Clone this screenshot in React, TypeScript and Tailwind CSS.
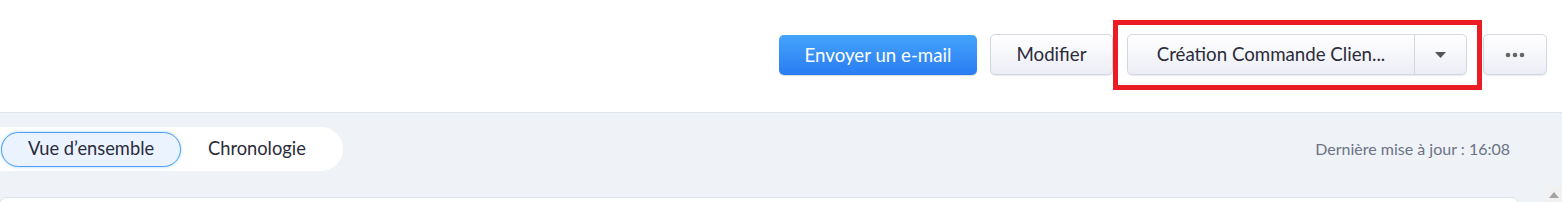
const btnGray =
  'flex h-[41px] items-center justify-center rounded-[5px] border border-[#d3d7e0] bg-gradient-to-b from-[#ffffff] to-[#eceef5] shadow-[0_1px_1px_rgba(0,0,0,0.08)]'

function App() {
  return (
    <div
      className="relative h-[202px] w-[1562px] overflow-hidden bg-[#eff2f6] text-[#2b2b3a]"
      style={{ fontFamily: 'Lato, "Open Sans", sans-serif' }}
    >
      {/* barre d'actions */}
      <div className="flex h-[113px] items-start justify-end border-b border-[#dde3ea] bg-white pr-[15px] pt-[34px]">
        <button className="mt-[1px] flex h-[40px] w-[198px] items-center justify-center rounded-[5px] bg-gradient-to-b from-[#44a3fb] to-[#2b7cf3] text-[18.7px] text-white shadow-[0_1px_1px_rgba(0,0,0,0.15)]">
          Envoyer un e-mail
        </button>
        <button className={`${btnGray} ml-[13px] w-[123px] text-[18.7px]`}>Modifier</button>
        <div className={`${btnGray} ml-[14px] w-[340px] justify-start`}>
          <span className="flex-1 text-center text-[18.7px]">Création Commande Clien...</span>
          <span className="flex h-full w-[52px] items-center justify-center border-l border-[#d3d7e0]">
            <svg width="11" height="6" viewBox="0 0 11 6">
              <path d="M0 0h11L5.5 6z" fill="#555" />
            </svg>
          </span>
        </div>
        <button className={`${btnGray} ml-[16px] w-[64px]`}>
          <svg width="20" height="6" viewBox="0 0 20 6">
            <circle cx="3" cy="3" r="2.3" fill="#666" />
            <circle cx="10" cy="3" r="2.3" fill="#666" />
            <circle cx="17" cy="3" r="2.3" fill="#666" />
          </svg>
        </button>
      </div>

      {/* onglets */}
      <div className="flex items-center justify-between pr-[52px] pt-[14px]">
        <div className="flex h-[44px] items-center rounded-r-full bg-white pr-[37px] pl-[1px]">
          <div className="flex h-[35px] w-[180px] items-center justify-center rounded-full border border-[#4aa0f5] bg-[#eaf3ff] text-[18.3px] shadow-[0_0_3px_rgba(74,160,245,0.5)]">
            Vue d’ensemble
          </div>
          <div className="pl-[27px] text-[18.3px]">Chronologie</div>
        </div>
        <div className="text-[16px] text-[#6b7385]">Dernière mise à jour : 16:08</div>
      </div>

      {/* carte */}
      <div className="mt-[26px] mr-[44px] h-[20px] rounded-t-[6px] border border-[#dde3ea] bg-white" />

      {/* barre de défilement */}
      <div className="absolute right-0 top-[186px] flex h-[16px] w-[16px] items-end justify-center bg-[#f1f1f1] pb-[4px]">
        <svg width="10" height="6" viewBox="0 0 10 6">
          <path d="M5 0l5 6H0z" fill="#a3a3a3" />
        </svg>
      </div>

      {/* cadre d'annotation */}
      <div className="pointer-events-none absolute left-[1113px] top-[20px] h-[70px] w-[369px] border-[5px] border-[#ec1c24]" />
    </div>
  )
}

export default App
